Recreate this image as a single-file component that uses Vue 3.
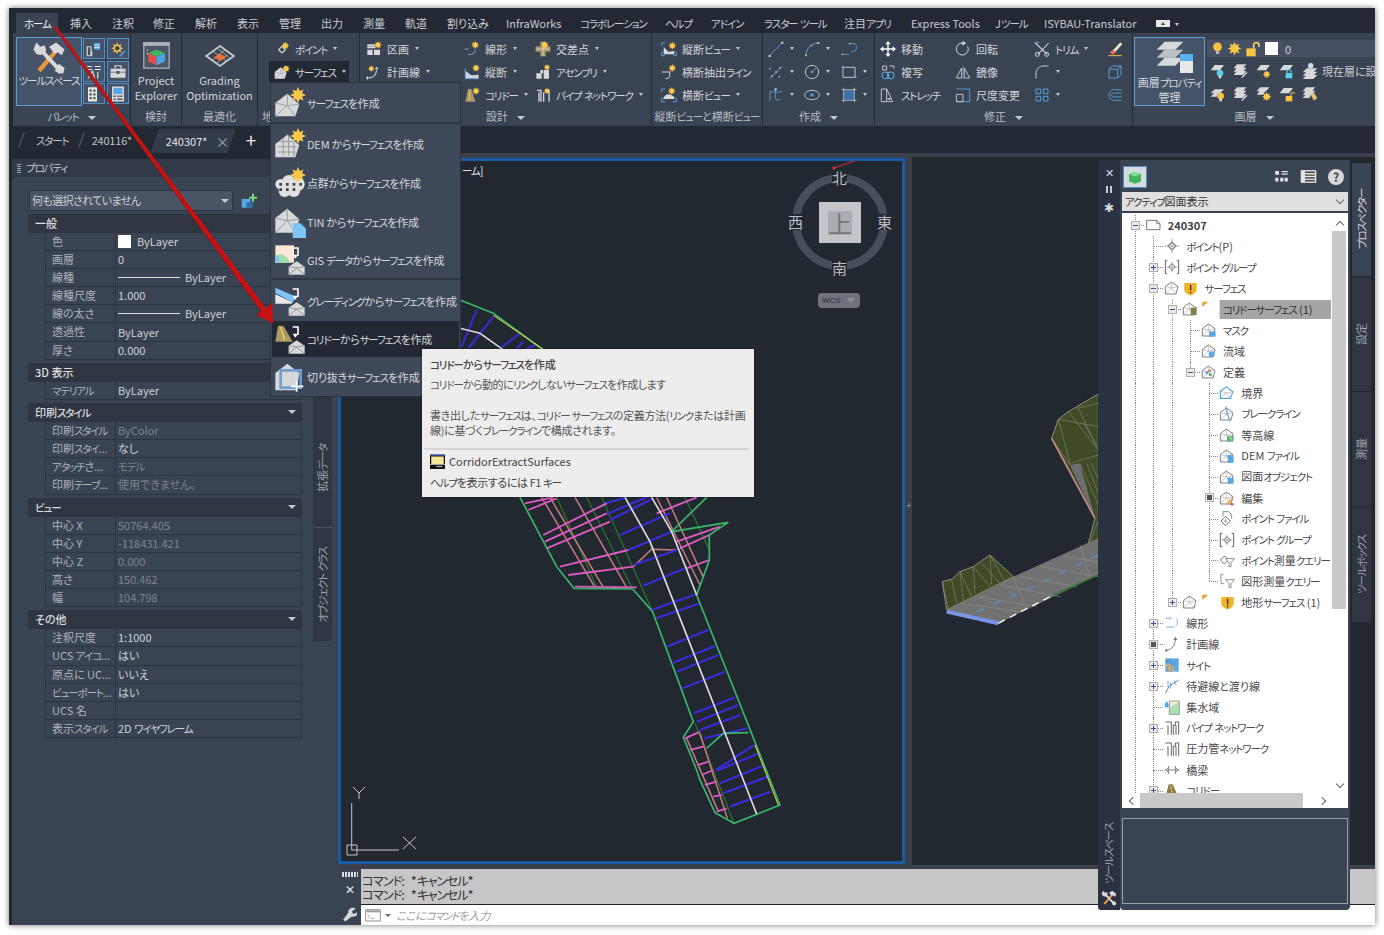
<script setup>
import { h } from 'vue'

const L = (d, c = '#cfd2d6', w = 1.4) => `<path d="${d}" fill="none" stroke="${c}" stroke-width="${w}"/>`
const F = (d, c = '#cfd2d6') => `<path d="${d}" fill="${c}"/>`
const B = '#5aa7e6'
const G = '#d6d8da'
const Y = '#f5c542'

function star(cx, cy, r) {
  let d = ''
  for (let i = 0; i < 16; i++) {
    const a = (i * Math.PI) / 8
    const rr = i % 2 ? r * 0.55 : r
    d += (i ? 'L' : 'M') + (cx + rr * Math.cos(a)).toFixed(1) + ' ' + (cy + rr * Math.sin(a)).toFixed(1)
  }
  return F(d + 'Z', '#fbc94a')
}
const surf = F('M1 22V12L10 5 19 13 16 22Z', G) + L('M1 22L10 14 16 22M10 5V14L19 13M1 12L10 14', '#9a9a9a', 0.7)
const house = (x, y) => F(`M${x} ${y + 10}V${y + 4}L${x + 6} ${y}L${x + 12} ${y + 4}V${y + 10}Z`, G) + L(`M${x} ${y + 10}L${x + 6} ${y + 5}L${x + 12} ${y + 10}M${x} ${y + 4}L${x + 6} ${y + 5}L${x + 12} ${y + 4}`, '#888', 0.6)
const down = L('M14 3h4v6', '#fff', 1.2) + F('M16 11l-2-3h4z', '#fff')
const road = F('M2 22L6 3h5l6 19z', '#a89a6a') + L('M8 5l1 15', '#f5c542', 1.4)
const hs = '#6d6d6d'
const house2 = L('M2 21V10L11 3 21 10 18 21Z', hs, 1.3) + L('M2 21L11 12 18 21M11 12L21 10M11 12L2 10M11 3V12', '#999', 0.8)
const grid = L('M3 10h16M3 14h14M3 18h13M7 7v14M11 5v16M15 8v13', '#8c8c8c', 0.6)

const ICONS = {
  tools: L('M5 21L17 7', '#e8973c', 3) + F('M12 4l5-3 6 5-2 4-3-2-2 1z', '#d9d9d9') + L('M6 6l13 14', '#d9d9d9', 2.8) + F('M1 6l2-5 3 3 3-1 1 4-4 3-3-1z', '#d9d9d9') + F('M16 21l3-5 4 3-1 4-3 0z', '#d9d9d9'),
  'p-db': L('M3 21V9h5v12zM9 21v-6', G, 1.6) + F('M12 4h8v9h-8z', B) + L('M12 7h8M12 10h8', '#fff', 0.8),
  'p-gear': star(11, 11, 8) + '<circle cx="11" cy="11" r="3" fill="#3b4453"/>' + L('M14 22l7-7', B, 2.2),
  'p-text': L('M3 6h6M3 10h6M13 6h8M13 10h8', '#fff', 1.2) + L('M4 22L10 12l3 10M6 18h6', G, 1.6) + L('M17 13v9', G, 1.8),
  'p-box': F('M2 9h20v12H2z', G) + L('M8 9V5h8v4', G, 1.6) + F('M2 13h20v1H2z', '#555') + F('M10 12h4v4h-4z', '#555'),
  'p-bldg': F('M4 3h12v19H4z', '#e9e9e9') + F('M6 6h3v3H6zM11 6h3v3h-3zM6 11h3v3H6zM11 11h3v3h-3zM6 16h3v3H6zM11 16h3v3h-3z', '#555'),
  'p-calc': F('M4 2h16v20H4z', '#d5d7da') + F('M6 4h12v8H6z', B) + F('M6 14h3v2H6zM11 14h3v2h-3zM15 14h3v2h-3zM6 18h3v2H6zM11 18h7v2h-7z', '#555'),
  project: F('M1 1h22v22H1z', '#4d5666') + L('M1.5 1.5h21v21h-21z', '#aeb2b8', 1) + F('M1 1h22v3H1z', '#aeb2b8') + F('M12 7l7 3-7 3-7-3z', '#3fb45e') + F('M5 10l7 3v7l-7-3z', '#e34d4d') + F('M19 10l-7 3v7l7-3z', '#4aa2e0') + F('M4 7h1v1H4zM4 10h1v1H4z', '#ddd'),
  grading: L('M12 4l11 8-11 8L1 12z', '#c6c8cc', 1.4) + L('M6 8l11 8M10 6l9 7M5 16l11-9M9 18l9-7', '#aeb2b8', 0.7) + F('M12 10l5 3-5 3-5-3z', '#e8743b'),
  point: L('M12 8l5 5-5 5-5-5z', G, 1.8) + star(17, 7, 6),
  surface: surf + star(18, 7, 6),
  parcel: F('M2 5h12v6H2zM12 13h9v8h-9zM2 13h8v8H2z', '#d9dadc') + L('M2 8h12', '#777', 0.8) + star(18, 6, 6),
  plan: L('M3 21c7 0 12-3 13-12', '#d6d8da', 1.6) + F('M16 4l-3 4h6z', '#d6d8da') + F('M3 18l-3 3 3 3z', '#d6d8da') + star(8, 7, 5),
  align: L('M1 12h6M6 20c5 1 11-1 11-7M12 4c2 0 4 1 5 3', '#8fc1ea', 1.2) + star(17, 6, 6),
  prof: F('M2 10l9 7 11-1v6H2z', '#cfd2d6') + L('M2 6v16h20', B, 1.4) + star(18, 6, 6),
  corr: road + star(18, 6, 6),
  inter: F('M8 1h8v22H8z', '#a89a6a') + F('M1 8h22v8H1z', '#a89a6a') + L('M12 2v20M2 12h20', '#fff', 0.7) + star(15, 6, 6),
  assem: F('M2 14h8v8H2zM13 9h8v13h-8z', '#d6d8da') + F('M8 9h4v5H8z', '#d6d8da') + star(18, 5, 5),
  pipe: L('M3 5h6v17M6 22V8M13 22V8M18 5h3v17', '#d6d8da', 2) + star(18, 6, 5),
  pv: L('M1 3h5M1 3v5M1 16v6h5M23 16v6h-5', B, 1.4) + F('M4 9l7 7 9-1v5H4z', '#d6d8da') + star(17, 7, 6),
  secl: L('M1 12h13M13 12v7c0 2-3 3-6 3', '#d6d8da', 1.4) + L('M13 12l2-2', '#e86a5a', 2) + star(17, 6, 6),
  sv: L('M1 3h5M1 3v5M1 16v6h5M23 16v6h-5', B, 1.4) + F('M3 18c3-8 9-10 17-3v3z', '#d6d8da') + star(16, 6, 6),
  line: L('M2 22L22 2', B, 1.3) + F('M1 21h3v3H1zM20 1h3v3h-3z', '#d6d8da'),
  arc: L('M3 22C3 12 10 4 21 3', B, 1.3) + F('M2 20h2v3H2zM10 6h2v2h-2zM20 2h3v2h-3z', '#d6d8da'),
  poly: L('M2 20h10M13 4h6c3 0 4 2 4 4v3c0 3-2 5-8 5', B, 1.2) + F('M1 19h2v2H1zM12 3h2v2h-2z', '#d6d8da'),
  cons: L('M3 22L22 3', B, 1.3) + F('M5 17h2v2H5zM11 11h2v2h-2zM17 5h2v2h-2zM2 6h2v2H2zM16 18h2v2h-2z', '#d6d8da'),
  circle: '<circle cx="12" cy="12" r="10" fill="none" stroke="#d6d8da" stroke-width="1.3"/>' + L('M12 12L19 5', B, 1.2) + F('M11 11h2v2h-2z', '#d6d8da'),
  rect: L('M3 5h18v15H3z', '#d6d8da', 1.3) + F('M1 3h3v3H1zM20 18h3v3h-3z', B),
  spline: L('M3 7h8M3 7v14M11 4v12c0 3 3 4 8 3M11 8l10-1', B, 1.2) + F('M10 2h3v3h-3z', '#d6d8da'),
  ellipse: '<ellipse cx="12" cy="12" rx="11" ry="7" fill="none" stroke="#d6d8da" stroke-width="1.2"/>' + F('M10 10h4v4h-4z', B),
  hatch: F('M4 4h16v16H4z', '#3f6fa8') + L('M4 1v22M20 1v22M1 4h22M1 20h22', '#d6d8da', 1),
  move: L('M12 2v20M2 12h20', '#fff', 2) + F('M12 0l4 5H8zM12 24l4-5H8zM0 12l5-4v8zM24 12l-5-4v8z', '#fff'),
  copy: L('M4 3h6v6H4z', '#d6d8da', 1.3) + L('M14 3h7M21 3v4', '#d6d8da', 1.3) + '<circle cx="8" cy="17" r="5" fill="none" stroke="#5aa7e6" stroke-width="1.6"/><circle cx="16" cy="17" r="5" fill="none" stroke="#5aa7e6" stroke-width="1.6"/>',
  stretch: L('M2 3h8v19H2zM10 3l9 19H10', '#d6d8da', 1.3) + F('M10 17l7 0-3 3z', '#d6d8da'),
  rotate: L('M19 8A9 9 0 1 1 11 3', '#d6d8da', 1.5) + F('M11 0l6 3-6 4z', '#d6d8da'),
  mirror: L('M2 21L10 6v15zM14 6v15h8z', '#d6d8da', 1.3) + L('M12 2v21', B, 1.2),
  scale: L('M2 3h20v19H2', B, 1.3) + L('M2 11h10v11H2z', '#d6d8da', 1.3),
  trim: L('M2 3l18 17M22 3L6 20', '#d6d8da', 1.6) + '<circle cx="5" cy="20" r="3" fill="none" stroke="#d6d8da" stroke-width="1.5"/><circle cx="19" cy="20" r="3" fill="none" stroke="#d6d8da" stroke-width="1.5"/>' + L('M1 2h7', B, 1.5),
  fillet: L('M3 22V14C3 8 8 3 14 3h8', '#d6d8da', 1.3) + F('M2 14h2v2H2zM13 2h2v2h-2z', B),
  array: L('M3 3h7v7H3zM14 3h7v7h-7zM3 14h7v7H3zM14 14h7v7h-7z', B, 1.4),
  erase: F('M9 14L20 2l3 3-11 12z', '#e9e3d0') + F('M4 17l5-4 4 4-4 4z', '#e86a5a') + L('M2 22h20', Y, 1.5),
  box3d: L('M3 8h13v13H3zM3 8l5-5h13v13l-5 5M16 8l5-5', B, 1.3),
  offset: L('M22 4H10C6 4 3 8 3 12s3 8 7 8h12M22 9H10c-2 0-3 1-3 3s1 3 3 3h12', B, 1.3),
  layers: F('M2 8L8 2h14l-6 6z', G) + F('M2 14L8 8h14l-6 6z', '#bcbfc3') + F('M2 20L8 14h14l-6 6z', G),
  bulb: '<circle cx="12" cy="9" r="8" fill="#f5c542"/>' + F('M9 17h6v5H9z', '#bfc2c6'),
  sun: star(12, 12, 11) + '<circle cx="12" cy="12" r="4" fill="#fbc94a"/>',
  lock: F('M2 11h14v12H2z', Y) + L('M13 11V6c0-5 8-5 8 0v3', '#f5d16a', 2.4),
  lsBulb: F('M1 11L7 3h14l-6 8z', G) + '<circle cx="15" cy="15" r="5" fill="#5ad0e6"/>' + F('M13 19h4v4h-4z', G),
  lsIso: F('M1 8L6 2h14l-5 6zM1 13L6 7h14l-5 6zM1 18L6 12h14l-5 6z', G) + L('M13 22l8-8', '#fff', 1.6),
  lsFreeze: F('M1 11L7 3h14l-6 8z', G) + star(16, 17, 6),
  lsLock: F('M1 11L7 3h14l-6 8z', G) + F('M10 15h10v8H10z', '#5ad0e6') + L('M12 15v-3c0-3 6-3 6 0v3', '#5ad0e6', 1.6),
  lsCur: F('M1 14L7 8h16l-6 6zM1 19L7 13h16l-6 6zM1 24L7 18h16l-6 6z', G) + '<circle cx="13" cy="4" r="4" fill="#cfe0ee"/>',
  lsB2: F('M1 11L7 5h14l-6 6zM1 16L7 10h6l-3 6z', G) + '<circle cx="16" cy="15" r="5" fill="#f5c542"/>' + F('M14 19h4v4h-4z', G),
  lsSun: F('M1 8L6 2h14l-5 6zM1 13L6 7h8l-3 6z', G) + star(16, 16, 7),
  lsOpen: F('M1 11L7 3h14l-6 8z', G) + F('M10 15h10v8H10z', Y) + L('M18 15v-3c0-3 5-3 5 0', Y, 1.6),
  lsTool: F('M1 8L6 2h14l-5 6zM1 13L6 7h14l-5 6zM1 18L6 12h8l-3 6z', G) + F('M13 13l5-3 5 8-5 4z', '#e8c070'),
  // menu
  mSurf: surf + star(18, 6, 6),
  mDem: F('M1 22V12L10 5 19 13 16 22Z', G) + grid + star(18, 6, 6),
  mCloud: '<circle cx="5" cy="13" r="4" fill="#e0e0e0"/><circle cx="11" cy="11" r="5" fill="#e0e0e0"/><circle cx="18" cy="13" r="5" fill="#e0e0e0"/><circle cx="8" cy="18" r="4.5" fill="#e0e0e0"/><circle cx="15" cy="18" r="4.5" fill="#e0e0e0"/>' + F('M4 12h2v2H4zM9 12h2v2H9zM14 12h2v2h-2zM19 12h2v2h-2zM4 16h2v2H4zM9 16h2v2H9zM14 16h2v2h-2z', '#444') + star(18, 6, 6),
  mTin: F('M1 20V9L10 2 19 10 16 20Z', G) + L('M1 20L10 11 16 20M10 2V11L19 10M1 9L10 11', '#9a9a9a', 0.7) + F('M14 13h6l4 4v7H14z', '#7dc3f5'),
  mGis: F('M1 1h14v13H1z', '#fbe6d8') + F('M1 14V9c3-2 8-2 11 5z', '#9fe0a8') + F('M1 9c2-1 3 0 3 0V14H1z', '#7dc3f5') + down + house(11, 13),
  mGrade: F('M1 2l16 7-3 4L1 6z', '#7dc3f5') + F('M1 7l13 6-1 1H1z', '#e8e8e8') + down + house(11, 13),
  mCorr: F('M1 14L3 2h4l7 12z', '#a89a6a') + L('M5 3l3 10', '#f5c542', 1.4) + down + house(11, 13),
  mCut: F('M1 22V9L10 2 19 9 17 22Z', G) + L('M5 7h15v13H5z', '#6fa0cf', 2) + L('M17 15v8M13 19h9', '#fff', 1.2),
  // tree
  tDoc: L('M1 5h15l5 5v9H1z', '#555', 1.2) + L('M16 5v5h5', '#555', 1),
  tPt: L('M12 6l6 6-6 6-6-6z', '#777', 1.6) + L('M12 1v22M1 12h22', '#999', 1.2),
  tPtg: L('M5 2H2v20h3M19 2h3v20h-3', '#555', 1.4) + L('M12 7l5 5-5 5-5-5z', '#666', 1.4) + L('M12 4v16M4 12h16', '#888', 1),
  tSurf: house2,
  tWarn: F('M2 3h20v10c0 5-5 8-10 10C7 21 2 18 2 13z', '#f0b429') + F('M11 6h2.4v9H11zM11 17h2.4v2.4H11z', '#533'),
  tFlag: F('M2 1h9L2 9z', '#e0a33a'),
  tCorrS: house2 + F('M13 10h9v11h-9z', '#8a7d50'),
  tMask: house2 + F('M12 14h10v8H12z', '#5aa7e6'),
  tWs: house2 + '<circle cx="16" cy="17" r="4.5" fill="#5aa7e6"/>',
  tDef: house2 + '<circle cx="9" cy="13" r="2.4" fill="#5aa7e6"/><circle cx="13" cy="10" r="2" fill="#e86a5a"/><circle cx="14" cy="16" r="2.4" fill="#5ab46a"/>',
  tBound: L('M2 20V9L11 3 21 10 17 20Z', B, 1.8) + L('M2 20L11 12 17 20M11 12L21 10M11 12L2 9', '#999', 0.8),
  tBrk: house2 + L('M10 1l6 22', B, 1.8),
  tCont: house2 + F('M12 13h10v9H12z', '#67b47a') + L('M15 15c3 0 4 2 4 5', '#fff', 0.8),
  tDem: house2 + F('M13 10h6l3 3v9h-9z', '#5aa7e6'),
  tObj: house2 + F('M13 13h9v9h-9z', '#5aa7e6'),
  tEdit: house2 + L('M12 21l8-8', '#f0a53a', 3) + F('M17 20h5v3h-5z', '#e04e4e'),
  tPtF: L('M6 1h9l4 5v6M6 1v7', '#666', 1.1) + L('M10 8l7 7-7 7-7-7z', '#666', 1.4) + L('M10 12v6M7 15h6', '#888', 1),
  tPtQ: L('M8 6l6 6-6 6-6-6z', '#666', 1.4) + F('M10 10h13l-5 6v6h-3v-6z', '#fff') + L('M10 10h13l-5 6v6h-3v-6z', '#777', 1.2),
  tShQ: L('M3 2v14M3 2h4M3 16h5', '#777', 1.2) + F('M10 10h13l-5 6v6h-3v-6z', '#fff') + L('M10 10h13l-5 6v6h-3v-6z', '#777', 1.2),
  tAl: L('M2 5h7M18 5c3 3 3 9-1 12M3 18h12', '#6aa7d9', 1.3) + L('M8 2l3 3-3 3', '#999', 1),
  tPlan: L('M2 21c7 0 14-3 15-15', '#777', 1.4) + F('M17 1l-3 5h6z', '#777') + F('M5 19l-4 3 4 2z', '#777'),
  tSite: F('M2 2h20v20H2z', '#5aa7e6') + F('M2 12c6-3 12-3 14 10H7z', '#c9b78a') + L('M2 6h9v16M6 12v10', '#777', 1),
  tFl: L('M2 23l6-11 14-9', '#3c85c7', 1.4) + L('M6 4v10M10 6v10M16 4l2 6', '#3c85c7', 1),
  tCat: F('M8 3h15v20H8z', '#aee0b4') + F('M8 14c5-6 10-6 15-10v-1H8z', '#fbe6d8') + F('M4 3c2 3 3 5 3 7a3 3 0 1 1-6 0c0-2 1-4 3-7z', '#4da6e8') + L('M8 3h15v20H8z', '#777', 1),
  tPipe: L('M2 3h9v19M6 22V8M14 22V8H17V3h5v19M18 22V8', '#6d6d6d', 1.6),
  tBridge: L('M1 12h22M7 6v12M17 6v12M7 8l-4 4 4 4M17 8l4 4-4 4', '#777', 1.3),
  tRoad: F('M2 22L7 2h6l9 20z', '#8a7d50') + L('M10 4l3 16', '#f5c542', 1.4),
  tCube: F('M4 8l8-3 8 3v10l-8 3-8-3z', '#3fb45e') + F('M4 8l8 3 8-3-8-3z', '#8ae09c'),
  cBar: F('M2 3h6v6H2zM12 3h10v2H12zM12 7h10v2H12zM2 14h5v6H2zM10 14h5v6h-5zM17 14h5v6h-5z', '#e4e4e4'),
  cPanel: F('M1 3h22v18H1z', '#e4e4e4') + F('M7 5h14v2H7zM7 9h14v2H7zM7 13h14v2H7zM7 17h14v2H7z', '#444'),
  cmdBox: L('M1 4h22v17H1z', '#777', 1.2) + F('M2 5h20v3H2z', '#999') + L('M4 11l3 3-3 3M9 17h5', '#777', 1),
  thumb: F('M0 1h24v23H0z', '#111') + F('M0 1h24v2H0z', '#2c4fa8') + F('M2 4h20v12H2z', '#f3e79a') + F('M0 16h24v1H0z', '#fff') + F('M10 19h10v2H10z', '#aab'),
  wrench: F('M22 2l-6 5 1 3 3 1 5-4c1 5-3 10-9 8L5 23l-3-3L10 9C9 4 15-1 22 2z', '#d6d8da'),
}

const Ico = (p) => h('svg', { class: 'ico', viewBox: '0 0 24 24', width: p.s || 16, height: p.s || 16, innerHTML: ICONS[p.n] })
Ico.props = ['n', 's']

// Meiryo UI のカタカナは幅が狭いので、カタカナの連なりだけ詰める
const T = (p) => p.t.split(/([\u30A0-\u30FF]+)/).filter(Boolean).map((run) =>
  /^[\u30A0-\u30FF]/.test(run) ? h('span', { class: 'k' }, run) : run,
)
T.props = ['t']

const MENU_TABS = [
  { t: 'ホーム', w: 42 }, { t: '挿入', w: 42 }, { t: '注釈', w: 41 }, { t: '修正', w: 42 }, { t: '解析', w: 42 }, { t: '表示', w: 42 }, { t: '管理', w: 42 },
  { t: '出力', w: 42 }, { t: '測量', w: 42 }, { t: '軌道', w: 42 }, { t: '割り込み', w: 59 }, { t: 'InfraWorks', w: 74 }, { t: 'コラボレーション', w: 85 },
  { t: 'ヘルプ', w: 46 }, { t: 'アドイン', w: 53 }, { t: 'ラスター ツール', w: 80 }, { t: '注目アプリ', w: 67 }, { t: 'Express Tools', w: 84 }, { t: 'Jツール', w: 49 }, { t: 'ISYBAU-Translator', w: 120 },
]

const PALETTE_BTNS = ['p-db', 'p-gear', 'p-text', 'p-box', 'p-bldg', 'p-calc']

const TOOL_PANELS = [
  { cls: 'p4', label: '地形', cols: [
    { w: 'w-auto', items: [{ i: 'point', t: 'ポイント', c: 1 }, { i: 'surface', t: 'サーフェス', c: 1, on: 1 }] },
  ] },
  { cls: 'p5', label: '設計', caret: 1, cols: [
    { w: 'w98', items: [{ i: 'parcel', t: '区画', c: 1 }, { i: 'plan', t: '計画線', c: 1 }] },
    { w: 'w71', items: [{ i: 'align', t: '線形', c: 1 }, { i: 'prof', t: '縦断', c: 1 }, { i: 'corr', t: 'コリドー', c: 1 }] },
    { w: 'w-auto', items: [{ i: 'inter', t: '交差点', c: 1 }, { i: 'assem', t: 'アセンブリ', c: 1 }, { i: 'pipe', t: 'パイプ ネットワーク', c: 1 }] },
  ] },
  { cls: 'p6', label: '縦断ビューと横断ビュー', cols: [
    { w: 'w-auto', items: [{ i: 'pv', t: '縦断ビュー', c: 1 }, { i: 'secl', t: '横断抽出ライン' }, { i: 'sv', t: '横断ビュー', c: 1 }] },
  ] },
  { cls: 'p7', label: '作成', caret: 1, cols: [
    { w: 'w36', items: [{ i: 'line', c: 1 }, { i: 'cons', c: 1 }, { i: 'spline', c: 1 }] },
    { w: 'w37', items: [{ i: 'arc', c: 1 }, { i: 'circle', c: 1 }, { i: 'ellipse', c: 1 }] },
    { w: 'w-auto', items: [{ i: 'poly' }, { i: 'rect', c: 1 }, { i: 'hatch', c: 1 }] },
  ] },
  { cls: 'p8', label: '修正', caret: 1, cols: [
    { w: 'w75', items: [{ i: 'move', t: '移動' }, { i: 'copy', t: '複写' }, { i: 'stretch', t: 'ストレッチ' }] },
    { w: 'w79', items: [{ i: 'rotate', t: '回転' }, { i: 'mirror', t: '鏡像' }, { i: 'scale', t: '尺度変更' }] },
    { w: 'w73', items: [{ i: 'trim', t: 'トリム', c: 1 }, { i: 'fillet', c: 1 }, { i: 'array', c: 1 }] },
    { w: 'w-auto', items: [{ i: 'erase' }, { i: 'box3d' }, { i: 'offset' }] },
  ] },
]

const SECTIONS = [
  { t: '一般', rows: [
    { k: '色', v: 'ByLayer', sw: 1 }, { k: '画層', v: '0' }, { k: '線種', v: 'ByLayer', ln: 1 }, { k: '線種尺度', v: '1.000' },
    { k: '線の太さ', v: 'ByLayer', ln: 1 }, { k: '透過性', v: 'ByLayer' }, { k: '厚さ', v: '0.000' },
  ] },
  { t: '3D 表示', rows: [{ k: 'マテリアル', v: 'ByLayer' }] },
  { t: '印刷スタイル', caret: 1, rows: [
    { k: '印刷スタイル', v: 'ByColor', dim: 1 }, { k: '印刷スタイ...', v: 'なし' }, { k: 'アタッチさ...', v: 'モデル', dim: 1 }, { k: '印刷テーブ...', v: '使用できません。', dim: 1 },
  ] },
  { t: 'ビュー', caret: 1, rows: [
    { k: '中心 X', v: '50764.405', dim: 1 }, { k: '中心 Y', v: '-118431.421', dim: 1 }, { k: '中心 Z', v: '0.000', dim: 1 }, { k: '高さ', v: '150.462', dim: 1 }, { k: '幅', v: '104.798', dim: 1 },
  ] },
  { t: 'その他', caret: 1, rows: [
    { k: '注釈尺度', v: '1:1000' }, { k: 'UCS アイコ...', v: 'はい' }, { k: '原点に UC...', v: 'いいえ' }, { k: 'ビューポート...', v: 'はい' }, { k: 'UCS 名', v: '' }, { k: '表示スタイル', v: '2D ワイヤフレーム' },
  ] },
]

const MENU_ITEMS = [
  { i: 'mSurf', t: 'サーフェスを作成', cls: 'h41 sep' },
  { i: 'mDem', t: 'DEM からサーフェスを作成', cls: 'h39' },
  { i: 'mCloud', t: '点群からサーフェスを作成', cls: 'h39' },
  { i: 'mTin', t: 'TIN からサーフェスを作成', cls: 'h39' },
  { i: 'mGis', t: 'GIS データからサーフェスを作成', cls: 'h39 sep' },
  { i: 'mGrade', t: 'グレーディングからサーフェスを作成', cls: 'h41' },
  { i: 'mCorr', t: 'コリドーからサーフェスを作成', cls: 'h36 hot' },
  { i: 'mCut', t: '切り抜きサーフェスを作成', cls: 'h39' },
]

// 表示順に並べた行。col の縦線は次の同階層の行があるかで決める
const RAW_TREE = [
  { l: 0, x: '-', i: 'tDoc', t: '240307', bold: 1 },
  { l: 1, i: 'tPt', t: 'ポイント(P)' },
  { l: 1, x: '+', i: 'tPtg', t: 'ポイント グループ' },
  { l: 1, x: '-', i: 'tSurf', b: ['tWarn'], t: 'サーフェス' },
  { l: 2, x: '-', i: 'tCorrS', b: ['tFlag'], t: 'コリドーサーフェス (1)', sel: 1 },
  { l: 3, i: 'tMask', t: 'マスク' },
  { l: 3, i: 'tWs', t: '流域' },
  { l: 3, x: '-', i: 'tDef', t: '定義' },
  { l: 4, i: 'tBound', t: '境界' },
  { l: 4, i: 'tBrk', t: 'ブレークライン' },
  { l: 4, i: 'tCont', t: '等高線' },
  { l: 4, i: 'tDem', t: 'DEM ファイル' },
  { l: 4, i: 'tObj', t: '図面オブジェクト' },
  { l: 4, x: 'o', i: 'tEdit', t: '編集' },
  { l: 4, i: 'tPtF', t: 'ポイント ファイル' },
  { l: 4, i: 'tPtg', t: 'ポイント グループ' },
  { l: 4, i: 'tPtQ', t: 'ポイント測量クエリー' },
  { l: 4, i: 'tShQ', t: '図形測量クエリー' },
  { l: 2, x: '+', i: 'tSurf', b: ['tFlag', 'tWarn'], t: '地形サーフェス (1)' },
  { l: 1, x: '+', i: 'tAl', t: '線形' },
  { l: 1, x: 'o', i: 'tPlan', t: '計画線' },
  { l: 1, x: '+', i: 'tSite', t: 'サイト' },
  { l: 1, x: '+', i: 'tFl', t: '待避線と渡り線' },
  { l: 1, i: 'tCat', t: '集水域' },
  { l: 1, x: '+', i: 'tPipe', t: 'パイプ ネットワーク' },
  { l: 1, i: 'tPipe', t: '圧力管ネットワーク' },
  { l: 1, i: 'tBridge', t: '橋梁' },
  { l: 1, x: '+', i: 'tRoad', t: 'コリドー' },
]

function hasNext(i, level) {
  for (let j = i + 1; j < RAW_TREE.length; j++) {
    if (RAW_TREE[j].l === level) return true
    if (RAW_TREE[j].l < level) return false
  }
  return false
}
const TREE = RAW_TREE.map((r, i) => {
  const cols = []
  for (let c = 0; c < r.l; c++) cols.push(c === 0 || hasNext(i, c))
  return { ...r, cols, more: r.l === 0 || hasNext(i, r.l) }
})

const SIDE_TABS = [
  { t: 'プロスペクター', cls: 'st1 on' },
  { t: '設定', cls: 'st2' },
  { t: '測量', cls: 'st3' },
  { t: 'ツールボックス', cls: 'st4' },
]

// 図面の線。座標は拡大図のもの (1/3 倍して配置)
const PINK = '#e05cc4'
const SAL = '#c97a80'
const DG = '#2c7a2c'
const BLUE = '#3a2bd6'
const LOWER = [
  { c: DG, w: 3.5, l: [[170, 22, 290, 292], [260, 22, 395, 292], [305, 22, 458, 365], [555, 22, 628, 180], [585, 700, 702, 1000]] },
  { c: SAL, w: 4.5, l: [[125, 22, 285, 292], [150, 22, 310, 292], [225, 22, 380, 292], [470, 22, 600, 285], [500, 22, 610, 262], [560, 745, 655, 965], [600, 730, 682, 985], [400, 230, 455, 178, 530, 180]] },
  { c: BLUE, w: 6.5, l: [[310, 42, 380, 22], [320, 72, 440, 22], [330, 90, 460, 25], [360, 135, 510, 70], [385, 180, 515, 125], [400, 225, 530, 180], [430, 287, 555, 235], [455, 360, 590, 312], [468, 385, 600, 340], [500, 470, 625, 420], [520, 518, 645, 468], [530, 545, 655, 495], [548, 595, 675, 545], [582, 670, 705, 622], [590, 695, 715, 645], [600, 720, 722, 675], [612, 745, 742, 715], [648, 840, 762, 765], [650, 842, 778, 790], [660, 880, 795, 825], [670, 910, 803, 860], [690, 950, 812, 905]] },
  { c: PINK, w: 5.5, l: [[75, 40, 160, 22], [85, 60, 170, 25], [130, 135, 320, 40], [135, 155, 320, 70], [140, 175, 330, 95], [180, 230, 385, 180], [205, 255, 400, 230], [225, 290, 410, 292], [470, 70, 590, 22], [530, 155, 660, 110], [540, 175, 628, 135], [560, 235, 628, 210], [555, 745, 600, 725], [570, 780, 610, 770], [595, 825, 625, 815], [605, 855, 640, 840], [615, 885, 650, 875], [640, 920, 665, 915], [650, 965, 680, 955]] },
  { c: '#3bb56c', w: 5, l: [[60, 22, 170, 230, 222, 295, 398, 297, 458, 365, 580, 695, 550, 742, 590, 840, 600, 870, 645, 968, 702, 1000, 840, 945, 590, 315, 628, 210, 628, 135, 685, 97, 515, 125, 620, 22], [620, 775, 670, 730, 745, 728]] },
  { c: '#dcdcdc', w: 5, l: [[375, 22, 450, 155, 770, 972], [455, 22, 515, 125, 590, 315]] },
  { c: '#e6e04a', w: 3, l: [[765, 765, 835, 945]] },
]
const UPPER = [
  { c: BLUE, w: 6, l: [[605, 800, 650, 690], [625, 805, 700, 710], [720, 805, 780, 760], [770, 805, 790, 785], [800, 805, 825, 795]] },
  { c: '#3bb56c', w: 5, l: [[600, 660, 700, 700, 850, 810]] },
  { c: '#e6e04a', w: 3, l: [[700, 706, 850, 808]] },
  { c: '#d8d8d8', w: 4.5, l: [[600, 745, 660, 760, 730, 810]] },
]
const TIN_LINES = [
  [67, 605, 85, 685], [95, 598, 110, 670], [120, 575, 130, 665], [120, 575, 155, 650], [160, 560, 165, 640], [160, 560, 210, 620], [210, 525, 215, 615], [210, 525, 255, 605], [185, 550, 240, 610],
  [535, 70, 470, 85], [445, 95, 535, 210], [475, 85, 530, 200], [490, 130, 530, 195], [415, 118, 450, 250], [415, 118, 535, 140], [395, 175, 450, 255], [450, 250, 535, 225], [480, 250, 535, 375], [500, 250, 535, 340], [515, 250, 535, 300], [510, 490, 535, 420],
]
const BAND_LINES = [
  [120, 670, 300, 695], [170, 650, 350, 680], [240, 615, 420, 650], [300, 590, 470, 620], [360, 560, 535, 590], [430, 530, 535, 545], [280, 590, 320, 690], [480, 495, 510, 590],
]
const pts = (a) => a.join(',')
</script>

<template>
  <div class="page">
    <div class="window">
      <nav class="menu-tabs">
        <span v-for="(m, i) in MENU_TABS" :key="m.t" class="mtab" :class="{ on: i === 0 }" :style="{ width: m.w + 'px' }"><T :t="m.t" /></span>
        <span class="mini"><span class="mini-tri"></span></span>
        <span class="caret"></span>
      </nav>

      <div class="ribbon">
        <section class="panel p1">
          <div class="pbody">
            <div class="big big1">
              <Ico n="tools" :s="34" />
              <span><T t="ツールスペース" /></span>
            </div>
            <div class="pal-grid">
              <span v-for="b in PALETTE_BTNS" :key="b" class="pal-btn"><Ico :n="b" :s="18" /></span>
            </div>
          </div>
          <div class="plabel"><T t="パレット" /><span class="caret lbl"></span></div>
        </section>
        <section class="panel p2">
          <div class="pbody stack">
            <Ico n="project" :s="29" />
            <span class="big-label">Project<br />Explorer</span>
          </div>
          <div class="plabel">検討</div>
        </section>
        <section class="panel p3">
          <div class="pbody stack">
            <Ico n="grading" :s="30" />
            <span class="big-label">Grading<br />Optimization</span>
          </div>
          <div class="plabel">最適化</div>
        </section>
        <section v-for="p in TOOL_PANELS" :key="p.cls" class="panel" :class="p.cls">
          <div class="pbody tools">
            <div v-for="(c, ci) in p.cols" :key="ci" class="tcol" :class="c.w">
              <div v-for="(it, ii) in c.items" :key="ii" class="tool" :class="{ active: it.on }">
                <Ico :n="it.i" :s="16" />
                <span v-if="it.t" class="tool-t"><T :t="it.t" /></span>
                <span v-if="it.c" class="caret"></span>
              </div>
            </div>
          </div>
          <div class="plabel"><T :t="p.label" /><span v-if="p.caret" class="caret lbl"></span></div>
        </section>
        <section class="panel p9">
          <div class="pbody layer-body">
            <div class="big big9">
              <span class="layer-ic">
                <Ico n="layers" :s="32" />
                <span class="layer-badge"></span>
              </span>
              <span><T t="画層プロパティ" /><br />管理</span>
            </div>
            <div class="layer-tools">
              <div class="layer-combo">
                <Ico n="bulb" :s="13" />
                <Ico n="sun" :s="15" />
                <Ico n="lock" :s="16" />
                <span class="swatch big-sw"></span>
                <span class="layer-0">0</span>
              </div>
              <div class="layer-row">
                <Ico n="lsBulb" />
                <Ico n="lsIso" />
                <Ico n="lsFreeze" />
                <Ico n="lsLock" />
                <Ico n="lsCur" />
                <span class="tool-t clip">現在層に設定</span>
              </div>
              <div class="layer-row">
                <Ico n="lsB2" />
                <Ico n="lsIso" />
                <Ico n="lsSun" />
                <Ico n="lsOpen" />
                <Ico n="lsTool" />
              </div>
            </div>
          </div>
          <div class="plabel">画層<span class="caret lbl"></span></div>
        </section>
      </div>

      <div class="doc-tabs">
        <span class="slash"></span>
        <span class="dtab t-start"><T t="スタート" /></span>
        <span class="slash"></span>
        <span class="dtab t-old">240116*</span>
        <span class="dtab-active">
          <span class="dtab-text">240307*</span>
          <span class="dtab-x">×</span>
        </span>
        <span class="dtab-plus">+</span>
      </div>

      <div class="main">
        <aside class="props">
          <div class="props-title"><span class="grip"></span><T t="プロパティ" /></div>
          <div class="props-body">
            <div class="props-col">
              <div class="props-head">
                <div class="select">何も選択されていません<span class="caret pick"></span></div>
                <svg class="props-ic" viewBox="0 0 24 24" width="16" height="16">
                  <path d="M1 9h13v13H1z" fill="#5aa7e6" />
                  <path d="M8 14h10v8H8z" fill="#2f6fa8" />
                  <path d="M18 1v12M12 7h12" stroke="#7fd27f" stroke-width="3" />
                </svg>
              </div>
              <div v-for="s in SECTIONS" :key="s.t" class="section">
                <div class="sec-head"><T :t="s.t" /><span v-if="s.caret" class="caret sec"></span></div>
                <div v-for="r in s.rows" :key="r.k" class="prow">
                  <span class="pkey"><T :t="r.k" /></span>
                  <span class="pval" :class="{ dim: r.dim }">
                    <span v-if="r.sw" class="swatch"></span>
                    <span v-if="r.ln" class="ln"></span>
                    <span><T :t="r.v" /></span>
                  </span>
                </div>
              </div>
            </div>
            <div class="vtabs">
              <div class="vtab vt1"><span class="vt"><T t="拡張データ" /></span></div>
              <div class="vtab vt2"><span class="vt"><T t="オブジェクト クラス" /></span></div>
            </div>
          </div>
        </aside>

        <div class="work">
          <div class="views">
            <div class="vp vp-main">
              <svg class="canvas" viewBox="341 161 561 700" width="561" height="700">
                <g transform="translate(260 80) scale(.3333)">
                  <template v-for="(g, gi) in UPPER" :key="gi">
                    <polyline v-for="(l, li) in g.l" :key="li" :points="pts(l)" fill="none" :stroke="g.c" :stroke-width="g.w" />
                  </template>
                </g>
                <g transform="translate(500 490) scale(.3333)">
                  <template v-for="(g, gi) in LOWER" :key="gi">
                    <polyline v-for="(l, li) in g.l" :key="li" :points="pts(l)" fill="none" :stroke="g.c" :stroke-width="g.w" />
                  </template>
                </g>
                <path d="M834 168L865 157" stroke="#c22a3a" stroke-width="1.3" />
                <circle cx="834" cy="168" r="1.6" fill="#e02a3a" />
                <path d="M351.7 803V850H399" fill="none" stroke="#c4c6c8" stroke-width="1" />
                <path d="M347 845h10v10h-10z" fill="none" stroke="#c4c6c8" stroke-width="1" />
                <path d="M353 787l6 6 6-6M359 793v6M403 837l13 12M416 837l-13 12" fill="none" stroke="#c4c6c8" stroke-width="1" />
              </svg>
              <span class="vp-label"><T t="ーム]" /></span>
              <div class="cube">
                <div class="ring"></div>
                <div class="face"><span class="face-in">上</span></div>
                <span class="dir n">北</span>
                <span class="dir s">南</span>
                <span class="dir e">東</span>
                <span class="dir w">西</span>
              </div>
              <div class="wcs">WCS<span class="wcs-tri"></span></div>
            </div>
            <div class="vp-split"><span class="plus">+</span></div>
            <div class="vp vp-side">
              <svg class="canvas" viewBox="912 157 463 708" width="463" height="708">
                <g transform="translate(920 380) scale(.3333)">
                  <path d="M535 42L445 95 415 118 395 175 525 415 505 490 535 480Z" fill="#3f4a26" stroke="#8d8f80" stroke-width="3" />
                  <path d="M450 255L480 250 525 415 490 340Z" fill="#6d6e70" />
                  <path d="M67 605L95 598 120 575 160 560 210 525 280 590 80 690Z" fill="#3f4a26" stroke="#8d8f80" stroke-width="3" />
                  <line v-for="(l, i) in TIN_LINES" :key="i" :x1="l[0]" :y1="l[1]" :x2="l[2]" :y2="l[3]" stroke="#8f9285" stroke-width="1.6" />
                  <path d="M80 690L280 590 535 475V585L235 730Z" fill="#727272" />
                  <line v-for="(l, i) in BAND_LINES" :key="'b' + i" :x1="l[0]" :y1="l[1]" :x2="l[2]" :y2="l[3]" stroke="#8b8b8b" stroke-width="2" />
                  <path d="M170 695L340 620 535 525" fill="none" stroke="#5b8fc0" stroke-width="4" stroke-dasharray="24 30" />
                  <path d="M80 695L235 730" stroke="#7795e6" stroke-width="12" />
                  <path d="M235 730L400 645" stroke="#fff" stroke-width="4" stroke-dasharray="22 16" />
                  <path d="M400 645L535 585" stroke="#2c7a2c" stroke-width="4" />
                  <path d="M395 175L525 415" stroke="#c98a8a" stroke-width="5" />
                </g>
              </svg>
            </div>
          </div>
          <div class="cmd">
            <div class="cmd-strip">
              <span class="cmd-grip"></span>
              <span class="cmd-x">✕</span>
              <Ico n="wrench" :s="15" />
            </div>
            <div class="cmd-main">
              <div class="cmd-hist">
                <div><T t="コマンド:  *キャンセル*" /></div>
                <div><T t="コマンド:  *キャンセル*" /></div>
              </div>
              <div class="cmd-input">
                <Ico n="cmdBox" :s="16" />
                <span class="caret dark"></span>
                <span class="cmd-ph"><T t="ここにコマンドを入力" /></span>
              </div>
            </div>
          </div>
        </div>
      </div>

      <!-- ツールスペース -->
      <div class="palette">
        <div class="pal-strip">
          <span class="strip-x">✕</span>
          <span class="strip-pin"></span>
          <span class="strip-gear">✱</span>
          <span class="strip-name"><T t="ツールスペース" /></span>
          <Ico n="tools" :s="16" />
        </div>
        <div class="pal-pane">
          <div class="pal-top">
            <span class="cube-btn"><Ico n="tCube" :s="18" /></span>
            <span class="pal-right">
              <Ico n="cBar" :s="15" />
              <Ico n="cPanel" :s="17" />
              <span class="help">?</span>
            </span>
          </div>
          <div class="view-select"><T t="アクティブ図面表示" /><span class="chev"></span></div>
          <div class="tree-box">
            <div class="tree-top">
              <div class="tree">
                <div v-for="(r, i) in TREE" :key="i" class="trow">
                  <span v-for="(on, c) in r.cols" :key="c" class="cell" :class="{ guide: on }"></span>
                  <span class="cell tie" :class="{ guide: r.more, elbow: !r.more }">
                    <span v-if="r.x" class="exp" :class="{ plus: r.x === '+', dot: r.x === 'o' }"></span>
                  </span>
                  <span class="cell icell"><Ico :n="r.i" :s="16" /></span>
                  <span v-for="b in r.b" :key="b" class="cell icell"><Ico :n="b" :s="b === 'tFlag' ? 16 : 15" /></span>
                  <span class="tlabel" :class="{ bold: r.bold, sel: r.sel }"><T :t="r.t" /></span>
                </div>
              </div>
              <div class="vbar">
                <span class="chev up"></span>
                <span class="vthumb"></span>
                <span class="chev dn"></span>
              </div>
            </div>
            <div class="hbar">
              <span class="chev lf"></span>
              <span class="hthumb"></span>
              <span class="chev rt"></span>
            </div>
          </div>
          <div class="detail"></div>
        </div>
        <div class="pal-tabs">
          <div v-for="t in SIDE_TABS" :key="t.t" class="stab" :class="t.cls"><span class="vt"><T :t="t.t" /></span></div>
        </div>
      </div>

      <!-- 展開したメニューとツールチップ -->
      <div class="menu">
        <div v-for="m in MENU_ITEMS" :key="m.t" class="mitem" :class="m.cls">
          <Ico :n="m.i" :s="32" />
          <span><T :t="m.t" /></span>
        </div>
      </div>
      <div class="tip">
        <div class="tip-title"><T t="コリドーからサーフェスを作成" /></div>
        <div class="tip-sub"><T t="コリドーから動的にリンクしないサーフェスを作成します" /></div>
        <div class="tip-desc">
          <T t="書き出したサーフェスは、コリドー サーフェスの定義方法(リンクまたは計画" /><br />
          <T t="線)に基づくブレークラインで構成されます。" />
        </div>
        <div class="tip-cmd"><Ico n="thumb" :s="15" />CorridorExtractSurfaces</div>
        <div class="tip-help"><T t="ヘルプを表示するには F1 キー" /></div>
      </div>
      <svg class="arrow" viewBox="9 8 1366 917" width="1366" height="917">
        <path d="M54 27.5L56.5 26.5L266 308.5L272 303L273.5 323.5L256.5 315L261 311Z" fill="#ca1010" />
        <path d="M54 27.5L261 311L256.5 315" fill="none" stroke="#6a2020" stroke-width=".7" />
      </svg>
    </div>
  </div>
</template>

<style>
html, body { margin: 0; background: #fff; }
.k { font-size: .955em; letter-spacing: -1.1px; }
</style>

<style scoped>
.page {
  box-sizing: border-box;
  width: 1384px;
  height: 935px;
  padding: 8px 9px 10px;
  font-family: "Noto Sans CJK JP", "Noto Sans", sans-serif;
  font-size: 11px;
  font-feature-settings: "palt";
  color: #c9ccd1;
  background: #fff;
}
.window {
  position: relative;
  width: 1366px;
  height: 917px;
  background: #222933;
  box-shadow: 0 0 6px rgba(0, 0, 0, .55);
  overflow: hidden;
}
.ico { flex: none; display: block; }

/* ribbon tabs */
.menu-tabs { display: flex; height: 25px; align-items: flex-end; padding-left: 7px; }
.mtab { flex: none; box-sizing: border-box; padding-left: 8px; height: 20px; line-height: 20px; white-space: nowrap; }
.mtab.on { background: #3a4352; color: #eceef0; margin-right: 4px; }
.mini { position: relative; width: 14px; height: 7px; background: #e8e8e8; margin: 0 0 6px 0; }
.mini-tri { position: absolute; left: 5px; top: 2px; border: 2px solid transparent; border-top: 0; border-bottom: 3px solid #444; }
.menu-tabs .caret { margin: 0 0 7px 5px; }
.caret {
  display: inline-block;
  flex: none;
  width: 0;
  height: 0;
  border-left: 2.5px solid transparent;
  border-right: 2.5px solid transparent;
  border-top: 3px solid #c6c9ce;
}
.caret.lbl { margin-left: 9px; border-left-width: 4px; border-right-width: 4px; border-top-width: 4px; vertical-align: 1px; }
.caret.dark { border-top-color: #666; margin-left: 4px; border-left-width: 3px; border-right-width: 3px; }

.ribbon { display: flex; height: 93px; margin-left: 4px; }
.panel { display: flex; flex-direction: column; box-sizing: border-box; background: #3a4352; border-right: 1px solid #262c37; }
.p1 { width: 118px; }
.p2 { width: 51px; }
.p3 { width: 76px; }
.p4 { width: 102px; }
.p5 { width: 292px; }
.p6 { width: 111px; }
.p7 { width: 112px; }
.p8 { width: 258px; }
.p9 { flex: 1; border-right: 0; min-width: 0; }
.pbody { height: 75px; display: flex; box-sizing: border-box; }
.plabel { height: 18px; line-height: 16px; text-align: center; color: #b9bdc4; white-space: nowrap; }
.p4 .plabel { text-align: left; padding-left: 4px; }

.big {
  box-sizing: border-box;
  border: 1px solid #5f9fd6;
  background: #455369;
  color: #d8dade;
  display: flex;
  flex-direction: column;
  align-items: center;
  text-align: center;
  line-height: 15px;
}
.big1 { width: 66px; height: 69px; margin: 4px 0 0 3px; padding-top: 3px; font-size: 11px; white-space: nowrap; }
.big1 span { margin-top: -2px; }
.pal-grid { display: grid; grid-template-columns: 22px 22px; grid-auto-rows: 21px; gap: 1.5px; margin: 5px 0 0 1px; }
.pal-btn { display: flex; align-items: center; justify-content: center; border: 1px solid #4f8fc6; background: #455369; box-sizing: border-box; }

.stack { flex-direction: column; align-items: center; padding-top: 8px; color: #d2d5d9; }
.big-label { margin-top: 3px; text-align: center; line-height: 15px; font-size: 11px; white-space: nowrap; }
.p3 .big-label { margin-top: 2px; }

.tools { padding-top: 4px; }
.p4 .tools { padding-left: 16px; }
.p5 .tools { padding-left: 6px; }
.p6 .tools { padding-left: 9px; }
.p7 .tools { padding-left: 5px; }
.p8 .tools { padding-left: 5px; }
.tcol { display: flex; flex-direction: column; flex: none; }
.w98 { width: 98px; }
.w71 { width: 71px; }
.w36 { width: 36px; }
.w37 { width: 37px; }
.w75 { width: 75px; }
.w79 { width: 79px; }
.w73 { width: 73px; }
.tool { height: 23px; display: flex; align-items: center; gap: 5px; white-space: nowrap; color: #d2d5d9; }
.tool .caret { margin-left: 1px; }
.tool.active { background: #222933; margin-left: -5px; padding-left: 5px; padding-right: 3px; height: 21px; margin-top: 1px; margin-bottom: 1px; }
.tool-t { color: inherit; }
.tool-t.clip { margin-left: -3px; }

.layer-body { padding: 4px 0 0 1px; overflow: hidden; }
.big9 { width: 71px; height: 69px; font-size: 11px; padding-top: 1px; line-height: 14px; flex: none; }
.layer-ic { position: relative; display: block; height: 36px; }
.layer-badge { position: absolute; right: -7px; bottom: 2px; width: 13px; height: 19px; background: #e8e8e8; border-top: 7px solid #5ab0ee; box-sizing: border-box; }
.layer-tools { flex: 1; min-width: 0; margin-left: 2px; }
.layer-combo { display: flex; align-items: center; gap: 3px; height: 17px; margin-top: 3px; padding-left: 4px; background: #465062; }
.layer-0 { margin-left: 4px; color: #d2d5d9; }
.big-sw { width: 13px; height: 13px; margin-left: 1px; }
.layer-row { display: flex; align-items: center; gap: 7px; height: 23px; padding-left: 3px; white-space: nowrap; margin-top: 2px; color: #c9ccd1; }
.layer-row + .layer-row { margin-top: 0; }

/* document tabs */
.doc-tabs { display: flex; align-items: center; height: 27px; padding-left: 12px; color: #bfc3c9; }
.slash { width: 1px; height: 16px; background: #5a6270; transform: rotate(20deg); flex: none; }
.t-start { margin: 0 12px 0 14px; }
.t-old { margin-left: 10px; width: 59px; letter-spacing: -.2px; }
.dtab-active {
  display: flex;
  align-items: center;
  box-sizing: border-box;
  width: 85px;
  height: 24px;
  margin-top: 3px;
  padding-left: 15px;
  background: #333b48;
  clip-path: polygon(8px 0, 100% 0, calc(100% - 8px) 100%, 0 100%);
  color: #e2e4e7;
}
.dtab-x { margin-left: 8px; font-size: 14px; color: #9aa0a8; }
.dtab-plus { margin-left: 10px; font-size: 19px; line-height: 1; color: #e6e8ea; }

/* main */
.main { display: flex; height: 772px; }
.props { width: 329px; flex: none; display: flex; flex-direction: column; padding: 6px 0 0 3px; box-sizing: border-box; }
.props-title { height: 18px; line-height: 18px; background: #323a47; color: #c5c8cd; display: flex; align-items: center; padding-left: 5px; }
.grip { width: 4px; height: 9px; margin-right: 5px; background: repeating-linear-gradient(#9ea3aa 0 1px, transparent 1px 2px); }
.props-body { flex: 1; display: flex; background: #3a4352; padding: 13px 0 0 16px; border-radius: 4px 0 0 0; }
.props-col { width: 274px; flex: none; }
.props-head { display: flex; align-items: center; gap: 8px; height: 21px; margin-bottom: 3px; }
.select {
  position: relative;
  box-sizing: border-box;
  width: 204px;
  height: 21px;
  margin-left: 1px;
  padding-left: 2px;
  line-height: 19px;
  letter-spacing: -.6px;
  background: #4a5465;
  border: 1px solid #2c333f;
  border-radius: 2px;
  color: #cfd2d6;
}
.caret.pick { position: absolute; right: 3px; top: 8px; border-left-width: 4px; border-right-width: 4px; border-top-width: 4px; }
.section + .section { margin-top: 3.2px; }
.sec-head {
  position: relative;
  height: 19px;
  line-height: 19px;
  padding-left: 7px;
  background: #2f3642;
  font-weight: 500;
  color: #d9dbdf;
}
.caret.sec { position: absolute; right: 6px; top: 7px; border-left-width: 4px; border-right-width: 4px; border-top-width: 4px; }
.prow { display: flex; height: 18.1px; line-height: 17px; margin-left: 17px; box-sizing: border-box; border-bottom: 1px solid #2d3440; border-left: 1px solid #2d3440; border-right: 1px solid #2d3440; }
.pkey { box-sizing: border-box; width: 70px; padding-left: 6px; border-right: 1px solid #2d3440; color: #aeb3ba; white-space: nowrap; overflow: hidden; flex: none; }
.pval { display: flex; align-items: center; padding-left: 2px; color: #cfd2d6; white-space: nowrap; }
.pval.dim { color: #7d838c; }
.swatch { display: inline-block; flex: none; width: 13px; height: 13px; background: #fff; margin-right: 6px; }
.layer-combo .swatch { margin-right: 0; }
.ln { display: inline-block; width: 62px; height: 1px; background: #dcdcdc; margin-right: 5px; }
.vtabs { margin-left: 11px; width: 19px; flex: none; display: flex; flex-direction: column; }
.vtab { display: flex; justify-content: center; background: #2f3642; border-radius: 0 0 3px 0; }
.vt1 { height: 337px; align-items: flex-end; padding-bottom: 35px; box-sizing: border-box; }
.vt2 { height: 114px; align-items: center; border-top: 1px solid #454d5c; box-sizing: border-box; }
.vt { writing-mode: vertical-rl; text-orientation: sideways; transform: rotate(180deg); color: #9ea3ab; white-space: nowrap; line-height: 1; }

.work { flex: 1; min-width: 0; display: flex; flex-direction: column; }
.views { display: flex; height: 716px; padding-top: 4px; box-sizing: border-box; background: #3a404b; }
.vp { position: relative; background: #212830; flex: none; }
.vp-main { width: 567px; height: 706px; margin-top: 1px; border: 3px solid #1a5ca4; box-sizing: border-box; }
.vp-split { width: 7px; position: relative; color: #8b8f96; }
.plus { position: absolute; left: 1px; top: 340px; font-size: 10px; }
.vp-side { width: 463px; height: 708px; overflow: hidden; }
.canvas { position: absolute; left: 0; top: 0; display: block; }
.vp-label { position: absolute; left: 121px; top: 0; line-height: 18px; color: #e0e2e4; white-space: nowrap; }
.cube { position: absolute; left: 451px; top: 13px; width: 96px; height: 96px; font-feature-settings: normal; }
.ring { position: absolute; inset: 0; border: 8px solid #474e57; border-radius: 50%; box-sizing: border-box; }
.face { position: absolute; left: 27px; top: 28px; width: 42px; height: 41px; background: #c3c5c8; display: flex; align-items: center; justify-content: center; }
.face-in { width: 24px; height: 24px; line-height: 24px; text-align: center; background: #a9acb2; color: #74787f; font-size: 24px; }
.dir { position: absolute; font-size: 15px; line-height: 16px; color: #b9bcc0; background: #212830; }
.dir.n { left: 40px; top: -4px; }
.dir.s { left: 40px; top: 86px; }
.dir.e { left: 85px; top: 40px; }
.dir.w { left: -4px; top: 40px; }
.wcs {
  position: absolute;
  left: 477px;
  top: 132px;
  width: 42px;
  height: 15px;
  line-height: 15px;
  padding-left: 4px;
  box-sizing: border-box;
  border-radius: 4px;
  background: #6e737b;
  color: #3f444c;
  font-size: 8px;
  font-weight: 700;
  font-family: "Liberation Sans", sans-serif;
}
.wcs-tri { position: absolute; right: 5px; top: 5px; border-left: 4px solid transparent; border-right: 4px solid transparent; border-top: 5px solid #8b9097; }

.cmd { display: flex; height: 56px; }
.cmd-strip { width: 23px; flex: none; display: flex; flex-direction: column; align-items: center; background: #3a4352; padding-top: 3px; box-sizing: border-box; }
.cmd-grip { width: 16px; height: 5px; background: repeating-linear-gradient(90deg, #dcdde0 0 2px, transparent 2px 3px); }
.cmd-x { height: 20px; line-height: 24px; margin-bottom: 10px; font-size: 12px; color: #e8e8e8; }
.cmd-main { flex: 1; display: flex; flex-direction: column; }
.cmd-hist { flex: 1; padding: 5px 0 0 1px; box-sizing: border-box; background: #c6c6c6; color: #333; font-size: 13px; line-height: 14px; border-bottom: 1px solid #222; white-space: pre; }
.cmd-input { display: flex; align-items: center; height: 20px; padding-left: 4px; background: #fff; }
.cmd-ph { margin-left: 5px; font-style: italic; font-size: 11px; color: #9a9a9a; }

/* toolspace */
.palette { position: absolute; left: 1089px; top: 152px; width: 274px; height: 750px; display: flex; }
.pal-strip { width: 22px; flex: none; display: flex; flex-direction: column; align-items: center; background: #2a3140; border-radius: 3px 0 0 3px; color: #dcdde0; }
.strip-x { margin-top: 3px; height: 18px; line-height: 18px; font-size: 11px; }
.strip-pin { width: 6px; height: 7px; margin: 5px 0; border-left: 2px solid #c9c9c9; border-right: 2px solid #c9c9c9; box-sizing: border-box; }
.strip-gear { height: 16px; line-height: 16px; margin-top: 1px; font-size: 12px; }
.strip-name { margin-top: auto; margin-bottom: 6px; writing-mode: vertical-rl; text-orientation: sideways; transform: rotate(180deg); color: #9ea3ab; line-height: 1; }
.pal-strip .ico { margin-bottom: 4px; }
.pal-pane { width: 230px; flex: none; display: flex; flex-direction: column; background: #3a4352; border-radius: 0 0 4px 4px; box-sizing: border-box; padding: 0 2px; }
.pal-top { display: flex; align-items: center; justify-content: space-between; height: 32px; box-sizing: border-box; padding-top: 1px; }
.cube-btn { display: flex; align-items: center; justify-content: center; box-sizing: border-box; width: 24px; height: 22px; margin-left: 1px; background: #d4dce0; border: 1px solid #4f8fc6; }
.pal-right { display: flex; align-items: center; gap: 11px; margin-right: 4px; }
.help { width: 16px; height: 16px; border-radius: 50%; background: #d8d8d8; color: #3a4352; text-align: center; line-height: 16px; font-weight: 700; font-size: 12px; }
.view-select { position: relative; height: 19px; line-height: 19px; padding-left: 3px; background: #e0e0e0; color: #333; font-size: 11px; }
.chev { position: absolute; width: 5px; height: 5px; border-right: 1.4px solid #666; border-bottom: 1.4px solid #666; }
.view-select .chev { right: 5px; top: 5px; transform: rotate(45deg); }
.tree-box { margin-top: 2px; width: 226px; height: 595px; background: #fff; display: flex; flex-direction: column; }
.tree-top { height: 580px; display: flex; }
.tree { width: 210px; overflow: hidden; padding: 2px 0 0 4px; box-sizing: border-box; color: #4a4a4a; flex: none; }
.trow { display: flex; height: 20.95px; align-items: center; white-space: nowrap; }
.cell { position: relative; width: 18.4px; height: 100%; flex: none; }
.guide::before { content: ""; position: absolute; left: 9px; top: 0; bottom: 0; border-left: 1px dotted #8a8a8a; }
.elbow::before { content: ""; position: absolute; left: 9px; top: 0; height: 50%; border-left: 1px dotted #8a8a8a; }
.tie::after { content: ""; position: absolute; left: 9px; right: 0; top: 50%; border-top: 1px dotted #8a8a8a; }
.exp { position: absolute; z-index: 1; left: 5px; top: 6px; width: 9px; height: 9px; box-sizing: border-box; background: #e9e9e9; border: 1px solid #b0b0b0; }
.exp::before { content: ""; position: absolute; left: 1px; right: 1px; top: 3px; height: 1px; background: #44508c; }
.exp.plus::after { content: ""; position: absolute; top: 1px; bottom: 1px; left: 3px; width: 1px; background: #44508c; }
.exp.dot::before { left: 1px; right: 1px; top: 1px; height: 5px; background: #555; }
.icell { display: flex; align-items: center; justify-content: center; }
.tlabel { margin-left: 5px; line-height: 18px; }
.tlabel.bold { font-weight: 700; color: #444; }
.tlabel.sel { margin-left: 1px; padding: 0 0 0 3px; background: #a5a5a5; color: #333; border-left: 1px solid #ddd; width: 112px; box-sizing: border-box; }
.vbar { position: relative; width: 16px; flex: none; background: #fff; }
.vthumb { position: absolute; left: 0; right: 2px; top: 18px; height: 378px; background: #c9c9c9; }
.chev.up { left: 5px; top: 9px; transform: rotate(225deg); }
.chev.dn { left: 5px; top: 568px; transform: rotate(45deg); }
.hbar { position: relative; height: 15px; }
.hthumb { position: absolute; left: 18px; width: 163px; top: 0; height: 15px; background: #c9c9c9; }
.chev.lf { left: 8px; top: 5px; transform: rotate(135deg); }
.chev.rt { left: 197px; top: 5px; transform: rotate(-45deg); }
.detail { margin-top: 10px; width: 226px; height: 86px; box-sizing: border-box; border: 1px solid #9aa0a8; }
.pal-tabs { margin-left: 2px; width: 19px; flex: none; display: flex; flex-direction: column; padding-top: 3px; box-sizing: border-box; }
.stab { display: flex; align-items: center; justify-content: center; box-sizing: border-box; background: #2f3642; border-bottom: 1px solid #222933; }
.stab.on { background: #3a4352; }
.stab.on .vt { color: #d3d6da; }
.st1 { height: 114px; }
.st2 { height: 115px; }
.st3 { height: 115px; }
.st4 { height: 116px; border-radius: 0 0 3px 0; }

/* overlays */
.menu { position: absolute; left: 261px; top: 74px; width: 191px; box-sizing: border-box; padding: 0 1px; background: #3f4858; border: 1px solid #2b313d; }
.mitem { display: flex; align-items: center; gap: 1px; padding-left: 2px; color: #d5d8dc; white-space: nowrap; letter-spacing: -.2px; }
.h41 { height: 41px; }
.h39 { height: 39px; }
.h36 { height: 36px; }
.sep { border-bottom: 2px solid #2e3541; box-sizing: border-box; }
.hot { background: #222933; }
.tip {
  position: absolute;
  left: 413px;
  top: 341px;
  width: 332px;
  height: 148px;
  box-sizing: border-box;
  padding: 7px 8px 0;
  background: #ededed;
  color: #555;
  font-size: 11px;
  box-shadow: 0 0 2px rgba(0, 0, 0, .4);
}
.tip-title { height: 16px; line-height: 16px; color: #444; font-weight: 500; letter-spacing: -.1px; }
.tip-sub { margin-top: 4px; height: 16px; line-height: 16px; letter-spacing: -.5px; }
.tip-desc { margin-top: 16px; line-height: 14px; white-space: nowrap; letter-spacing: -.3px; }
.tip-cmd { display: flex; align-items: center; gap: 4px; margin: 10px -3px 0 -6px; padding: 3px 0 0 6px; border-top: 2px solid #d6d6d6; color: #444; }
.tip-help { margin-top: 5px; line-height: 16px; color: #444; letter-spacing: -.4px; }
.arrow { position: absolute; left: 0; top: 0; pointer-events: none; }
</style>
